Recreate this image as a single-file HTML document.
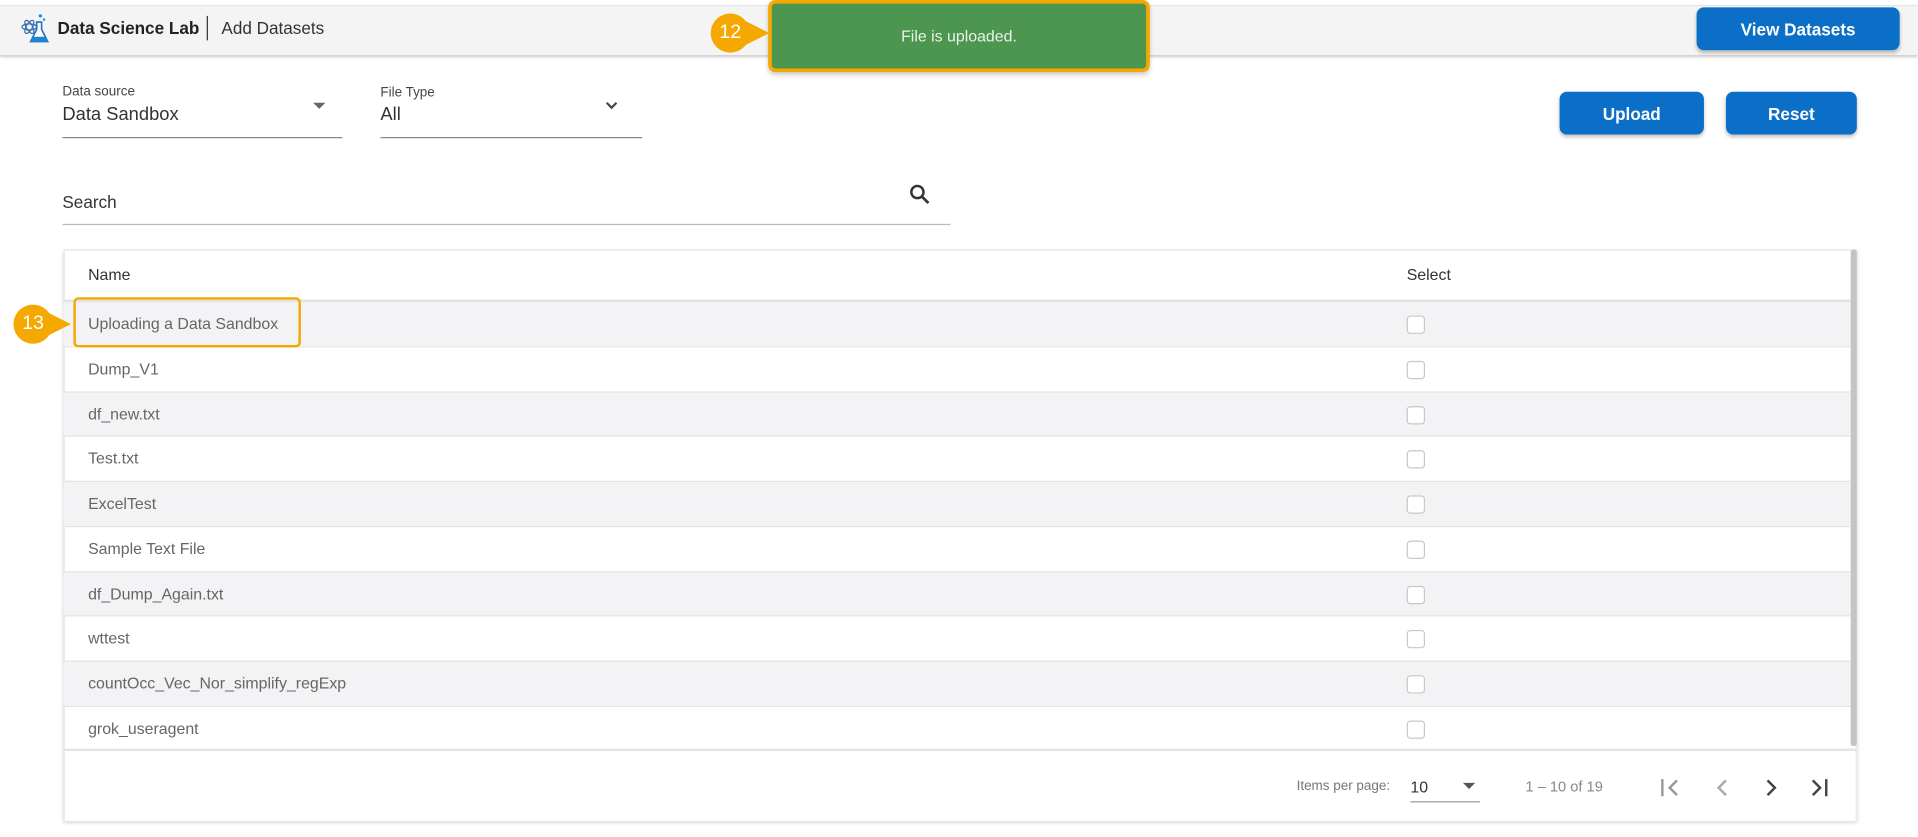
<!DOCTYPE html>
<html><head><meta charset="utf-8"><style>
html,body{margin:0;padding:0;width:1918px;height:837px;overflow:hidden;background:#fff;font-family:"Liberation Sans",sans-serif;}
#w{position:absolute;left:0;top:0;width:1568px;height:684px;transform:scale(1.22321);transform-origin:0 0;}
.a{position:absolute;}
.btn{position:absolute;background:#0c6fc7;color:#fff;font-weight:bold;font-size:14px;border-radius:6px;display:flex;align-items:center;justify-content:center;box-shadow:0 2px 3px rgba(0,0,0,.25);}
.row{position:absolute;left:52px;width:1462px;height:37px;border-top:1px solid #e4e4e4;box-sizing:border-box;}
.row span{position:absolute;left:20px;top:10px;font-size:13px;color:#666;}
.row i{position:absolute;left:1098px;top:11px;width:13px;height:13px;border:1px solid #c8c8c8;border-radius:3px;background:#fff;}
.g{background:#f3f3f5;}
.badge{position:absolute;width:32px;height:32px;border-radius:50%;background:#f5a800;color:#fff;font-size:16px;display:flex;align-items:center;justify-content:center;}
</style></head><body><div id="w">
<div class="a" style="left:0;top:4px;width:1568px;height:40px;background:#f4f4f5;border-top:1px solid #e6e6e6;box-shadow:0 2px 2px rgba(0,0,0,.2);"></div>
<svg class="a" style="left:17px;top:10px" width="24" height="28" viewBox="0 0 24 28"><g fill="none" stroke="#3d6fb0" stroke-width="1"><ellipse cx="7" cy="12" rx="6" ry="2.5"/><ellipse cx="7" cy="12" rx="6" ry="2.5" transform="rotate(60 7 12)"/><ellipse cx="7" cy="12" rx="6" ry="2.5" transform="rotate(-60 7 12)"/></g><path d="M13 8v6l-5 10h14l-5-10V8z" fill="#fff" stroke="#1f6fc0" stroke-width="1.3"/><path d="M10 20h10l2 4H8z" fill="#1f86d6"/><circle cx="16" cy="3" r="1.3" fill="#1f86d6"/><circle cx="19" cy="6" r="1" fill="#1f86d6"/></svg>
<div class="a" style="left:47px;top:15px;font-size:14px;font-weight:bold;color:#222">Data Science Lab</div>
<div class="a" style="left:169px;top:13px;width:1px;height:20px;background:#333"></div>
<div class="a" style="left:181px;top:15px;font-size:14px;color:#333">Add Datasets</div>
<div class="a" style="left:628px;top:0;width:306px;height:53px;background:#4c9650;border:3px solid #f5a800;border-radius:6px;color:#e8f3e8;font-size:13px;display:flex;align-items:center;justify-content:center;box-shadow:0 2px 4px rgba(0,0,0,.2)">File is uploaded.</div>
<div class="badge" style="left:581px;top:11px">12</div>
<div class="a" style="left:609px;top:17px;width:0;height:0;border-top:10px solid transparent;border-bottom:10px solid transparent;border-left:20px solid #f5a800"></div>
<div class="btn" style="left:1387px;top:6px;width:166px;height:35px">View Datasets</div>
<div class="a" style="left:51px;top:69px;font-size:11px;color:#444">Data source</div>
<div class="a" style="left:51px;top:85px;font-size:15px;color:#333">Data Sandbox</div>
<div class="a" style="left:51px;top:112px;width:229px;height:1px;background:#888"></div>
<div class="a" style="left:256px;top:84px;border-left:5px solid transparent;border-right:5px solid transparent;border-top:5px solid #666"></div>
<div class="a" style="left:311px;top:70px;font-size:11px;color:#444">File Type</div>
<div class="a" style="left:311px;top:85px;font-size:15px;color:#333">All</div>
<div class="a" style="left:311px;top:112px;width:214px;height:1px;background:#888"></div>
<svg class="a" style="left:494px;top:82px" width="12" height="9"><path d="M2 2l4 4 4-4" stroke="#444" stroke-width="1.8" fill="none"/></svg>
<div class="btn" style="left:1275px;top:75px;width:118px;height:35px">Upload</div>
<div class="btn" style="left:1411px;top:75px;width:107px;height:35px">Reset</div>
<div class="a" style="left:51px;top:157px;font-size:14px;color:#333">Search</div>
<svg class="a" style="left:743px;top:150px" width="18" height="18"><circle cx="7" cy="7" r="5" stroke="#333" stroke-width="2" fill="none"/><path d="M11 11l5 5" stroke="#333" stroke-width="2.2"/></svg>
<div class="a" style="left:51px;top:183px;width:726px;height:1px;background:#bbb"></div>
<div class="a" style="left:52px;top:204px;width:1466px;height:468px;border:1px solid #e8e8e8;box-sizing:border-box;box-shadow:0 1px 3px rgba(0,0,0,.2)"></div>
<div class="a" style="left:72px;top:217px;font-size:13px;color:#333">Name</div>
<div class="a" style="left:1150px;top:217px;font-size:13px;color:#333">Select</div>
<div class="a" style="left:52px;top:245px;width:1462px;height:2px;background:#e0e0e0"></div>
<div class="row g" style="top:246px"><span>Uploading a Data Sandbox</span><i></i></div>
<div class="row" style="top:283px"><span>Dump_V1</span><i></i></div>
<div class="row g" style="top:320px"><span>df_new.txt</span><i></i></div>
<div class="row" style="top:356px"><span>Test.txt</span><i></i></div>
<div class="row g" style="top:393px"><span>ExcelTest</span><i></i></div>
<div class="row" style="top:430px"><span>Sample Text File</span><i></i></div>
<div class="row g" style="top:467px"><span>df_Dump_Again.txt</span><i></i></div>
<div class="row" style="top:503px"><span>wttest</span><i></i></div>
<div class="row g" style="top:540px"><span>countOcc_Vec_Nor_simplify_regExp</span><i></i></div>
<div class="row" style="top:577px"><span>grok_useragent</span><i></i></div>
<div class="a" style="left:52px;top:612px;width:1466px;height:2px;background:#e4e4e4"></div>
<div class="a" style="left:1513px;top:204px;width:5px;height:406px;background:#c4c4c4;border-radius:2px"></div>
<div class="a" style="left:60px;top:243px;width:182px;height:37px;border:2px solid #f5a800;border-radius:4px"></div>
<div class="badge" style="left:11px;top:249px">13</div>
<div class="a" style="left:38px;top:255px;width:0;height:0;border-top:10px solid transparent;border-bottom:10px solid transparent;border-left:20px solid #f5a800"></div>
<div class="a" style="left:1060px;top:637px;font-size:11px;color:#777">Items per page:</div>
<div class="a" style="left:1153px;top:636px;font-size:13px;color:#333">10</div>
<div class="a" style="left:1196px;top:640px;border-left:5px solid transparent;border-right:5px solid transparent;border-top:5px solid #555"></div>
<div class="a" style="left:1153px;top:655px;width:57px;height:1px;background:#999"></div>
<div class="a" style="left:1247px;top:636px;font-size:12px;color:#888">1 – 10 of 19</div>
<svg class="a" style="left:1356px;top:634px" width="145" height="20" fill="none" stroke-width="2"><path d="M3 3v14M15 4l-6 6 6 6" stroke="#999"/><path d="M55 4l-6 6 6 6" stroke="#aaa"/><path d="M89 4l6 6-6 6" stroke="#444"/><path d="M126 4l6 6-6 6M137 3v14" stroke="#444"/></svg>
</div></body></html>
